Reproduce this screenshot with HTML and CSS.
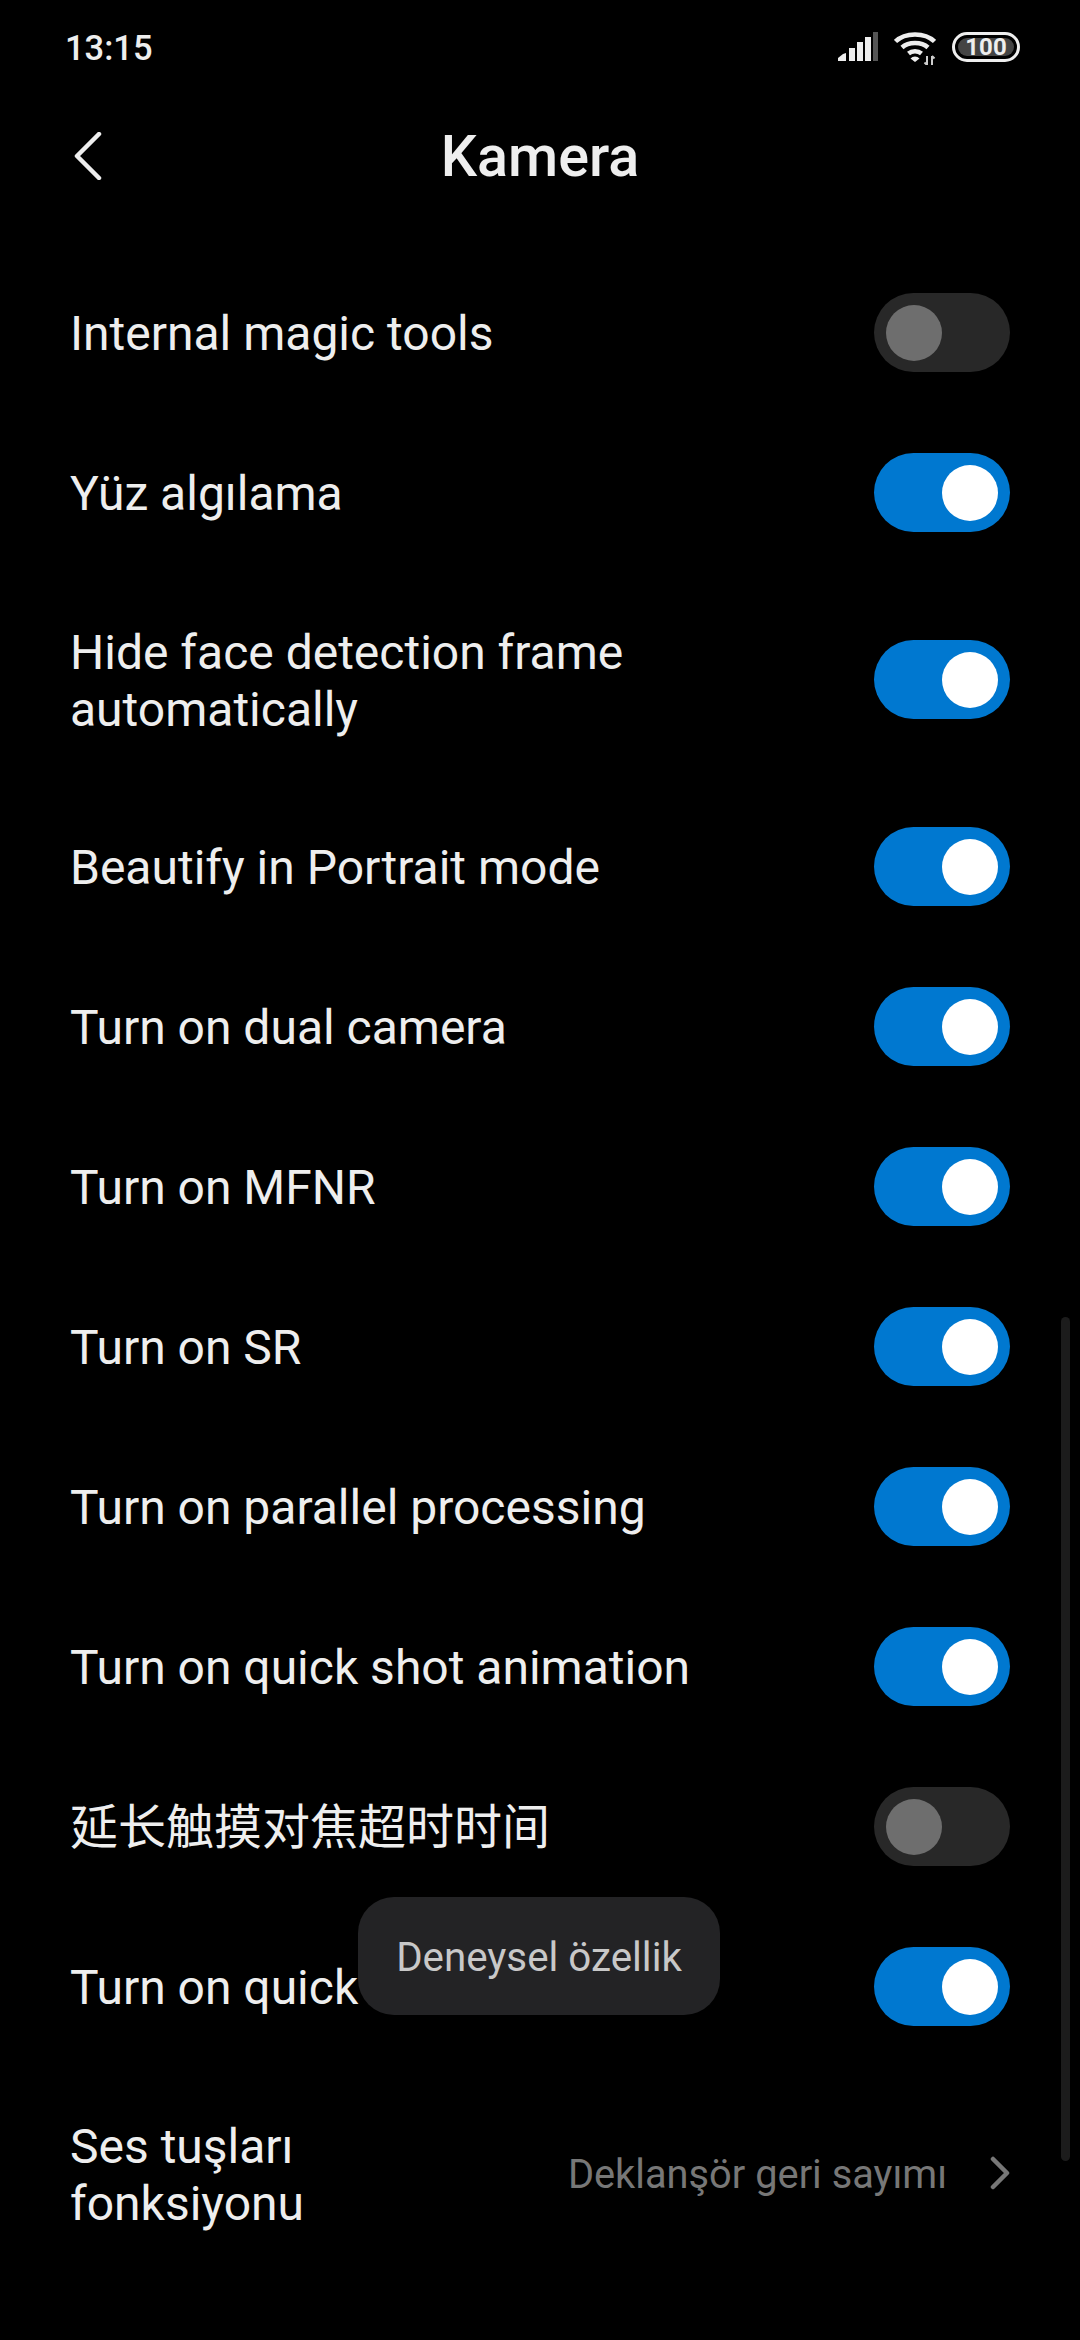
FILE: index.html
```html
<!DOCTYPE html>
<html lang="tr">
<head>
<meta charset="utf-8">
<title>Kamera</title>
<link rel="stylesheet" href="styles.css">
</head>
<body>
<div class="screen">
  <div class="status">
    <span class="time">13:15</span>
    <div class="status-icons">
      <svg class="ic-signal" width="40" height="29" viewBox="0 0 40 29">
        <path d="M0 29v-3l5-4 3-1v8z" fill="#eee"/>
        <rect x="11" y="16" width="6" height="13" fill="#eee"/>
        <rect x="19" y="10" width="6" height="19" fill="#eee"/>
        <rect x="27" y="5" width="6" height="24" fill="#eee"/>
        <rect x="35" y="0" width="5" height="29" fill="#555"/>
      </svg>
      <svg class="ic-wifi" width="42" height="33" viewBox="0 0 42 33">
        <g fill="none" stroke="#eee" stroke-width="4.500">
          <path d="M1.500 9.500C11 0 31 0 40.500 9.500"/>
          <path d="M8 15.500C14.500 9.500 27.500 9.500 34 15.500"/>
          <path d="M14.500 21.500C18 18.500 24 18.500 27.500 21.500"/>
        </g>
        <path d="M21 30l-4.500-3.500a6 6 0 0 1 9 0z" fill="#eee"/>
        <path d="M33 24v9M30.500 30.500l2.500 2.500M38 33v-9M38 24l2.500 2.500" fill="none" stroke="#ccc" stroke-width="2"/>
      </svg>
      <div class="battery"><span class="battery-fill">100</span></div>
    </div>
  </div>
  <header class="titlebar">
    <svg class="back" width="28" height="48" viewBox="0 0 28 48"><path d="M25 2L3 24l22 22" fill="none" stroke="#eee" stroke-width="4.500" stroke-linecap="round" stroke-linejoin="round"/></svg>
    <h1 class="title">Kamera</h1>
  </header>
  <main class="list">
    <div class="row"><span class="label">Internal magic tools</span><span class="toggle"></span></div>
    <div class="row"><span class="label">Yüz algılama</span><span class="toggle on"></span></div>
    <div class="row tall"><span class="label">Hide face detection frame<br>automatically</span><span class="toggle on"></span></div>
    <div class="row"><span class="label">Beautify in Portrait mode</span><span class="toggle on"></span></div>
    <div class="row"><span class="label">Turn on dual camera</span><span class="toggle on"></span></div>
    <div class="row"><span class="label">Turn on MFNR</span><span class="toggle on"></span></div>
    <div class="row"><span class="label">Turn on SR</span><span class="toggle on"></span></div>
    <div class="row"><span class="label">Turn on parallel processing</span><span class="toggle on"></span></div>
    <div class="row"><span class="label">Turn on quick shot animation</span><span class="toggle on"></span></div>
    <div class="row"><span class="label">延长触摸对焦超时时间</span><span class="toggle"></span></div>
    <div class="row"><span class="label">Turn on quick</span><span class="toggle on"></span></div>
    <div class="row tall"><span class="label">Ses tuşları<br>fonksiyonu</span>
      <div class="value-wrap"><span class="value">Deklanşör geri sayımı</span>
        <svg class="chev" width="20" height="34" viewBox="0 0 20 34"><path d="M3 3l14 14L3 31" fill="none" stroke="#777" stroke-width="4.500" stroke-linecap="round" stroke-linejoin="round"/></svg>
      </div>
    </div>
  </main>
  <div class="toast">Deneysel özellik</div>
  <div class="scrollbar"></div>
</div>
</body>
</html>
```
FILE: styles.css
```css
* { box-sizing: border-box; }
html, body { margin: 0; padding: 0; background: #000; }
.screen {
  position: relative;
  width: 1080px;
  height: 2340px;
  overflow: hidden;
  background: #000;
  color: #eee;
  font-family: Roboto, "Noto Sans CJK SC", sans-serif;
}
.status {
  height: 96px;
  padding: 30px 60px 0 65px;
  display: flex;
  justify-content: space-between;
  align-items: flex-start;
}
.time { font-size: 34.500px; line-height: 36px; font-weight: 500; color: #eee; }
.status-icons { display: flex; align-items: flex-start; padding-top: 2px; }
.ic-signal { margin-right: 16px; }
.ic-wifi { margin-right: 16px; }
.battery {
  width: 68px;
  height: 30px;
  border: 3px solid #eee;
  border-radius: 15px;
  padding: 3px;
  display: flex;
}
.battery-fill {
  flex: 1;
  background: #444;
  border-radius: 9px;
  color: #eee;
  font-size: 24px;
  font-weight: 700;
  line-height: 18px;
  text-align: center;
}
.titlebar {
  height: 156px;
  padding: 36px 0 0 74px;
  position: relative;
  display: flex;
  align-items: flex-start;
}
.title {
  margin: 0;
  position: absolute;
  left: 0;
  right: 0;
  top: 26px;
  text-align: center;
  font-size: 57.500px;
  line-height: 70px;
  font-weight: 500;
  color: #eee;
}
.list { display: flex; flex-direction: column; }
.row {
  height: 160px;
  padding: 0 70px 0 70px;
  display: flex;
  align-items: center;
  justify-content: space-between;
}
.row.tall { height: 214px; }
.label { font-size: 48px; line-height: 57px; color: #eee; padding-top: 2px; }
.tall .label { padding-top: 4px; }
.toggle {
  width: 136px;
  height: 79px;
  flex: none;
  border-radius: 40px;
  background: #282828;
  padding: 12px;
  display: flex;
}
.toggle::after {
  content: "";
  width: 56px;
  height: 56px;
  border-radius: 50%;
  background: #6e6e6e;
}
.toggle.on { background: #0078d0; justify-content: flex-end; }
.toggle.on::after { background: #fff; }
.value-wrap { display: flex; align-items: center; gap: 43px; }
.value { font-size: 39.800px; color: #777; padding-top: 3px; }
.toast {
  position: absolute;
  left: 358px;
  top: 1897px;
  width: 362px;
  height: 118px;
  padding-top: 3px;
  border-radius: 36px;
  background: #232325;
  color: #c8c8c8;
  font-size: 40.300px;
  display: flex;
  align-items: center;
  justify-content: center;
}
.scrollbar {
  position: absolute;
  left: 1061px;
  top: 1317px;
  width: 9px;
  height: 844px;
  border-radius: 5px;
  background: #1c1c1c;
}
```
